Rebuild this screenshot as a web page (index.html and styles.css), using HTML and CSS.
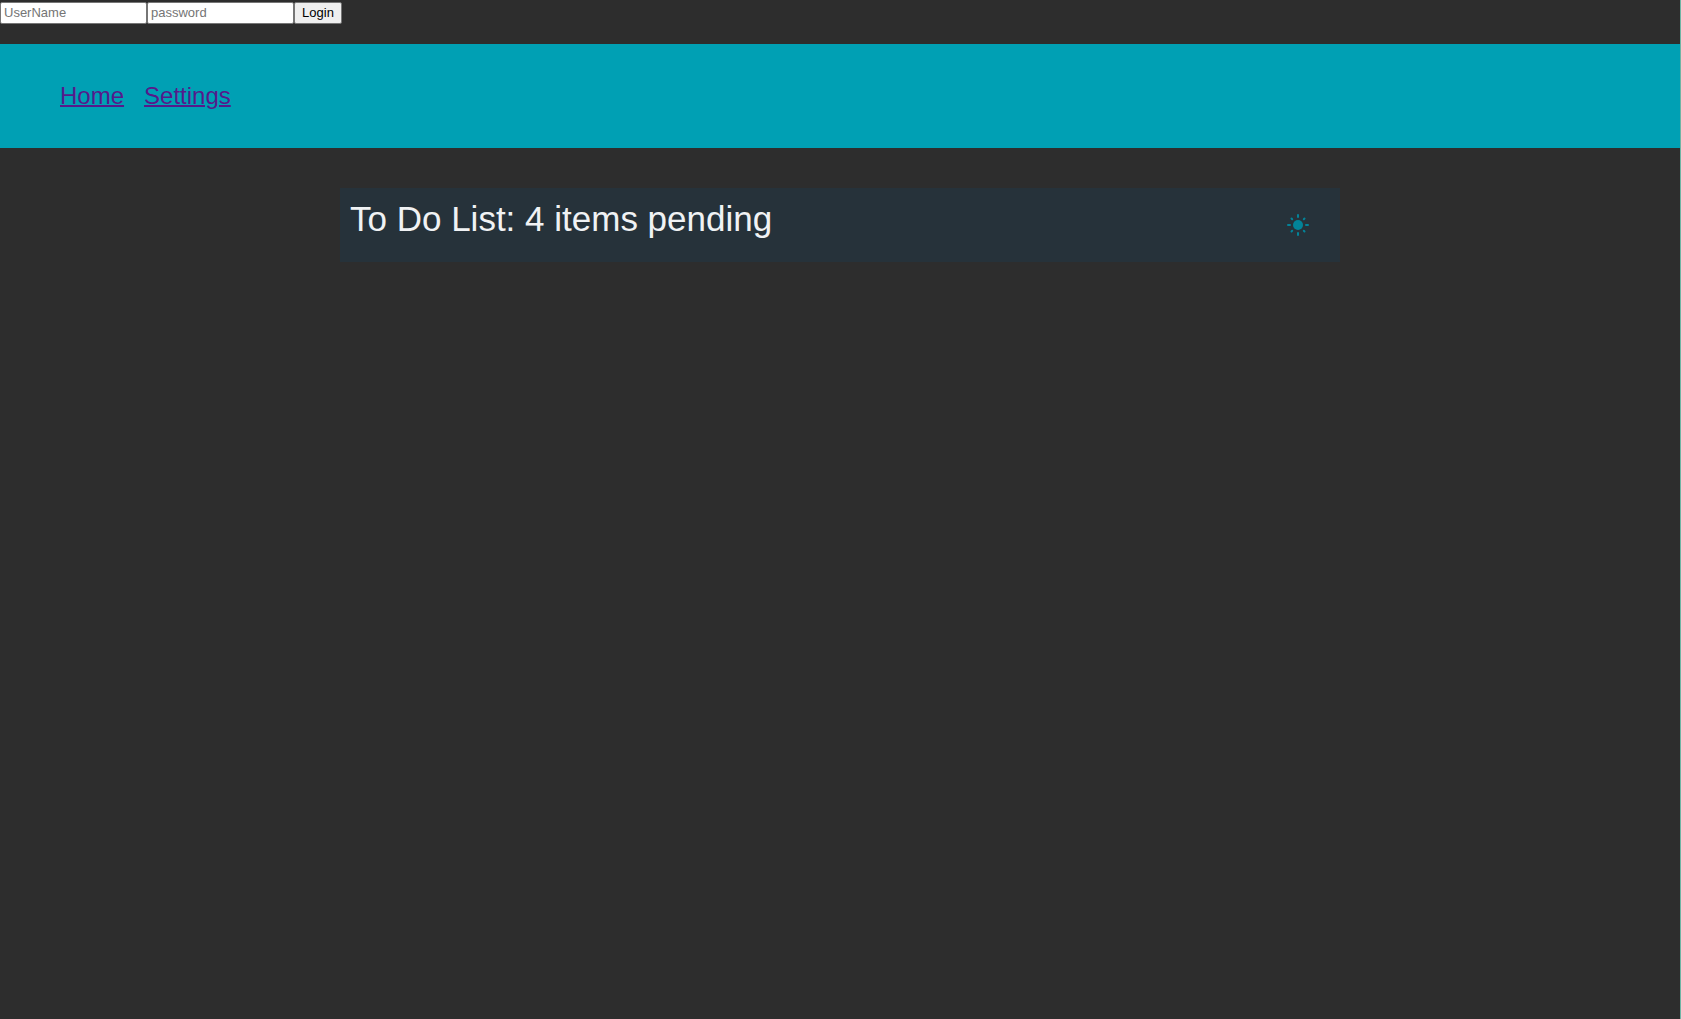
FILE: index.html
```
<!DOCTYPE html>
<html lang="en">
<head>
<meta charset="utf-8">
<title>To Do List</title>
<link rel="stylesheet" href="styles.css">
</head>
<body>
<form class="login">
<input class="field" type="text" placeholder="UserName" aria-label="UserName">
<input class="field" type="password" placeholder="password" aria-label="password">
<button class="submit" type="button">Login</button>
</form>
<nav class="navbar">
<a class="nav-link" href="#home">Home</a>
<a class="nav-link" href="#settings">Settings</a>
</nav>
<main class="page">
<header class="card">
<h1 class="title">To Do List: 4 items pending</h1>
<button class="theme" type="button" aria-label="Switch theme">
<svg class="sun" viewBox="0 0 22 22" aria-hidden="true">
<circle cx="11" cy="11" r="5"/>
<path d="M11 1v2M11 19v2M1 11h2M19 11h2M4.5 4.5l.7 .7M16.8 16.8l.7 .7M4.5 17.5l.7-.7M16.8 5.2l.7-.7"/>
</svg>
</button>
</header>
</main>
</body>
</html>
```
FILE: styles.css
```
* {
  box-sizing: border-box;
}

body {
  margin: 0;
  min-height: 100vh;
  border-right: 1px solid #6fb5a5;
  background: #2d2d2d;
  font-family: "Liberation Sans", Arial, sans-serif;
}

.login {
  display: flex;
  padding: 2px 0 20px;
}

.field,
.submit {
  height: 22px;
  border: 1px solid #767676;
  border-radius: 2px;
  font-family: inherit;
  font-size: 13px;
}

.field {
  width: 147px;
  padding: 0 3px 1px;
  background: #fff;
}

.field::placeholder {
  color: #757575;
}

.submit {
  width: 48px;
  padding: 0 0 1px;
  background: #efefef;
  color: #000;
}

.navbar {
  display: flex;
  gap: 20px;
  padding: 38px 60px;
  background: #00a0b4;
}

.nav-link {
  color: #551a8b;
  font-size: 24px;
  line-height: 28px;
  text-decoration-thickness: 2px;
}

.page {
  padding: 40px 20px;
}

.card {
  display: flex;
  justify-content: space-between;
  max-width: 1000px;
  margin: 0 auto;
  padding: 10px;
  background: #26323a;
}

.title {
  margin: 0;
  color: #f0f2f4;
  font-size: 35px;
  font-weight: 400;
  line-height: 42px;
}

.theme {
  display: flex;
  align-items: center;
  justify-content: center;
  width: 64px;
  height: 54px;
  padding: 0;
  border: 0;
  background: none;
  color: #038398;
}

.sun {
  width: 22px;
  height: 22px;
  fill: currentColor;
  stroke: currentColor;
  stroke-width: 2;
  stroke-linecap: round;
}

.sun circle {
  stroke: none;
}
```
